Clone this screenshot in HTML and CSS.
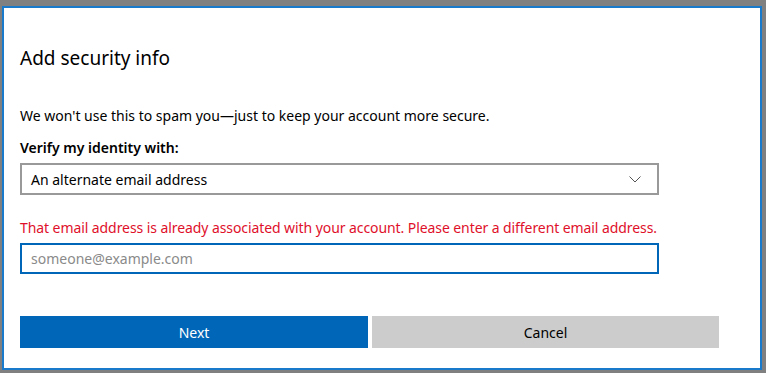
FILE: index.html
```html
<!DOCTYPE html>
<html>
<head>
<meta charset="utf-8">
<link rel="stylesheet" href="styles.css">
</head>
<body>
<div class="backdrop">
  <div class="dialog">
    <h1 class="title">Add security info</h1>
    <p class="intro">We won't use this to spam you—just to keep your account more secure.</p>
    <div class="label">Verify my identity with:</div>
    <div class="select">
      <span>An alternate email address</span>
      <svg class="chev" width="12" height="7" viewBox="0 0 12 7"><path d="M0.5 0.5 L6 6 L11.5 0.5" fill="none" stroke="#555" stroke-width="1"/></svg>
    </div>
    <div class="error">That email address is already associated with your account. Please enter a different email address.</div>
    <div class="input"><span class="placeholder">someone@example.com</span></div>
    <div class="buttons">
      <div class="btn primary">Next</div>
      <div class="btn secondary">Cancel</div>
    </div>
  </div>
</div>
</body>
</html>
```
FILE: styles.css
```css
html, body {
  margin: 0;
  padding: 0;
}
body {
  width: 766px;
  height: 373px;
  background: #808080;
  font-family: "Noto Sans", "Open Sans", sans-serif;
  overflow: hidden;
}
.backdrop {
  padding: 6px 4px 3px 2px;
  height: 364px;
  box-sizing: border-box;
}
.dialog {
  height: 364px;
  box-sizing: border-box;
  border: 2px solid #1979ca;
  background: #fff;
  padding: 0 0 0 16px;
  display: flex;
  flex-direction: column;
}
.title {
  margin: 36px 0 0 0;
  font-weight: 400;
  font-size: 19px;
  line-height: 28px;
  color: #000;
}
.intro {
  margin: 34px 0 0 0;
  font-size: 14px;
  line-height: 20px;
  color: #000;
}
.label {
  margin-top: 12px;
  font-size: 14px;
  line-height: 20px;
  font-weight: 600;
  color: #000;
}
.select {
  margin-top: 5px;
  width: 639px;
  height: 32px;
  box-sizing: border-box;
  border: 2px solid #999;
  display: flex;
  align-items: center;
  justify-content: space-between;
  padding: 0 16px 0 9px;
  font-size: 14px;
  color: #000;
}
.error {
  margin-top: 23px;
  font-size: 14px;
  letter-spacing: -0.08px;
  line-height: 20px;
  color: #e0102b;
}
.input {
  margin-top: 5px;
  width: 639px;
  height: 31px;
  box-sizing: border-box;
  border: 2px solid #0067b8;
  display: flex;
  align-items: center;
  padding: 0 9px;
  font-size: 14px;
}
.placeholder {
  color: #8a8a8a;
}
.buttons {
  margin-top: 42px;
  display: flex;
  gap: 4px;
}
.btn {
  width: 348px;
  height: 32px;
  display: flex;
  align-items: center;
  justify-content: center;
  font-size: 14px;
}
.btn.secondary {
  width: 347px;
}
.primary {
  background: #0067b8;
  color: #fff;
}
.secondary {
  background: #cccccc;
  color: #000;
}
```
